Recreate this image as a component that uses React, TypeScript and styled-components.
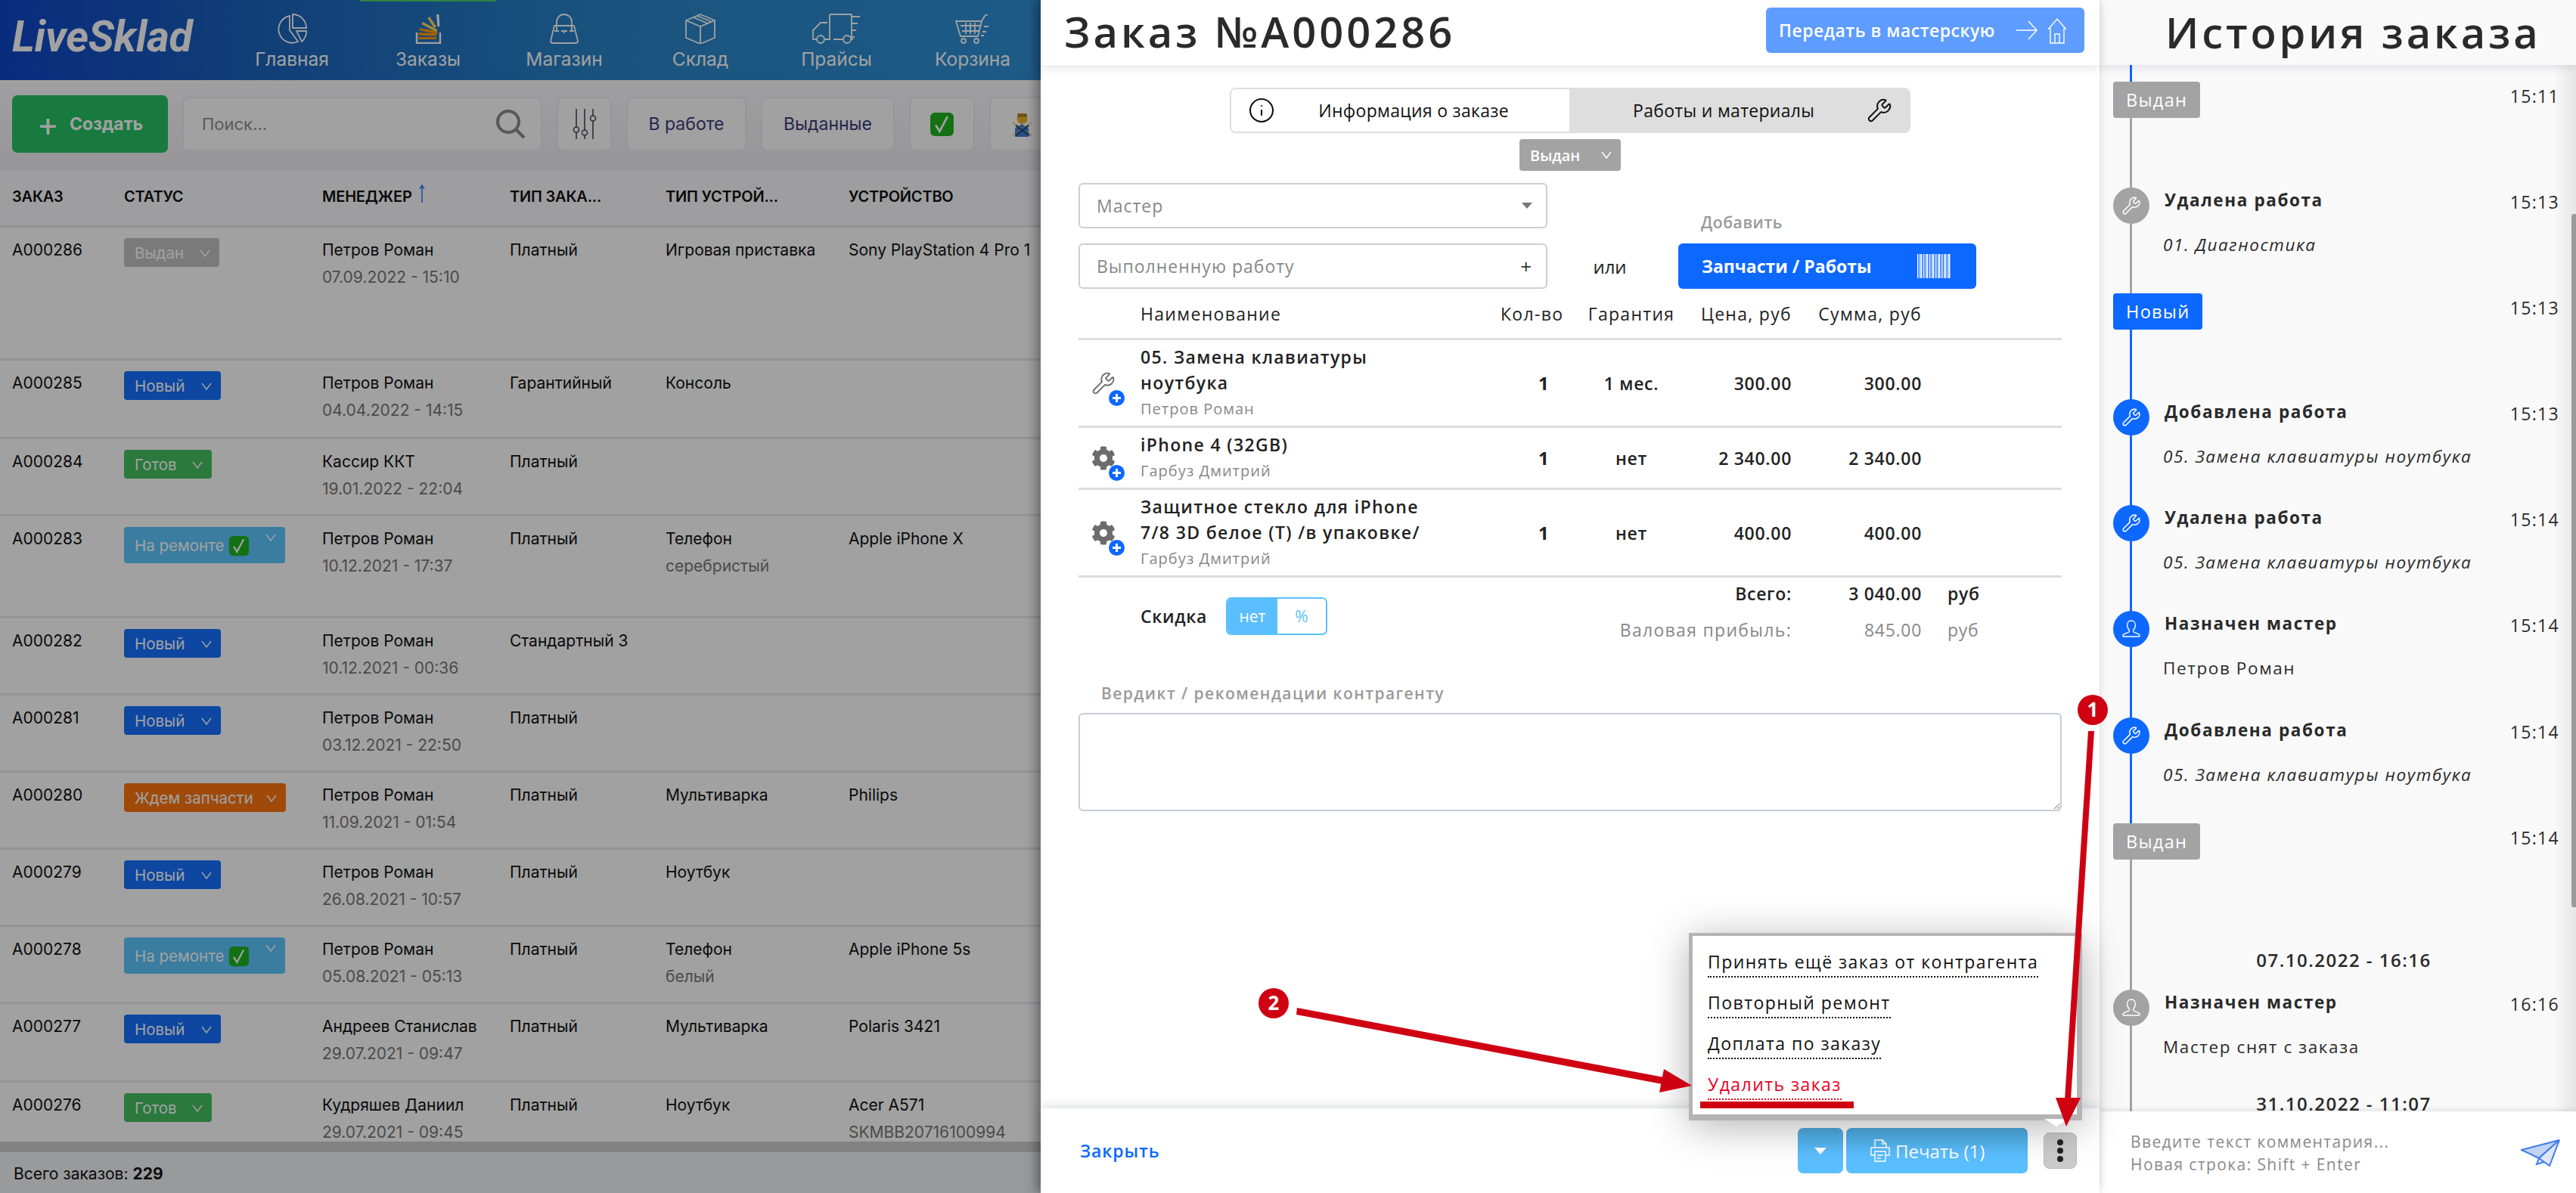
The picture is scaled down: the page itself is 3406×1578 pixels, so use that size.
import styled, { createGlobalStyle } from 'styled-components'
import { Wrench, Info } from 'lucide-react'
import { FaCog } from 'react-icons/fa'

const GlobalStyle = createGlobalStyle`
    html, body {
        margin: 0;
        padding: 0;
        background: #fff;
    }

    * {
        box-sizing: border-box;
    }
`

const Page = styled.div`
    position: relative;
    width: 3406px;
    height: 1578px;
    display: flex;
    overflow: hidden;
    font-family: "Open Sans", "Noto Sans", sans-serif;
`

/* ---- list of orders, dimmed behind the drawer ---- */

const ListPane = styled.div`
    position: relative;
    flex: none;
    width: 1376px;
    height: 100%;
    display: flex;
    flex-direction: column;
    overflow: hidden;
    font-family: Inter, "Open Sans", sans-serif;
    background: #fff;
`

const Dim = styled.div`
    position: absolute;
    inset: 0;
    background: rgba(0, 0, 0, 0.37);
    z-index: 5;
`

const NavBar = styled.div`
    flex: none;
    height: 106px;
    display: flex;
    background: linear-gradient(90deg, #1046c8 0%, #1a63bc 24%, #2a85c8 60%, #2f90d6 100%);
`

const Logo = styled.div`
    width: 296px;
    padding: 17px 0 0 16px;
    font-family: Roboto, sans-serif;
    font-style: italic;
    font-weight: 700;
    font-size: 57px;
    line-height: 64px;
    letter-spacing: -0.3px;
    color: #fff;
`

const NavItem = styled.div<{ $active?: boolean }>`
    position: relative;
    width: 180px;
    display: flex;
    flex-direction: column;
    align-items: center;
    padding-top: 18px;
    color: #fff;
    font-size: 24.5px;
    line-height: 40px;

    &::before {
        content: '';
        position: absolute;
        top: 0;
        left: 0;
        right: 0;
        height: 2px;
        background: ${(p) => (p.$active ? '#4bd06a' : 'transparent')};
    }

    svg {
        height: 40px;
        fill: none;
        stroke: #fff;
        stroke-width: 1.8;
    }
`

const Toolbar = styled.div`
    flex: none;
    height: 120px;
    display: flex;
    align-items: center;
    padding: 0 0 4px 16px;
    gap: 19px;
    background: linear-gradient(180deg, #fdfdff 0%, #eeeef3 100%);
`

const CreateButton = styled.div`
    flex: none;
    width: 206px;
    height: 76px;
    display: flex;
    align-items: center;
    justify-content: center;
    gap: 14px;
    border-radius: 7px;
    background: #27c264;
    color: #fff;
    font-size: 23px;
    font-weight: 700;
`

const PlusMark = styled.span`
    font-size: 44px;
    font-weight: 400;
    line-height: 40px;
`

const SearchBox = styled.div`
    flex: none;
    width: 476px;
    height: 72px;
    display: flex;
    align-items: center;
    justify-content: space-between;
    padding: 0 20px 0 24px;
    border: 2px solid #eeeef3;
    border-radius: 8px;
    background: #fff;
    font-size: 22px;
    color: #909090;
`

const ToolButton = styled.div<{ $w: number }>`
    flex: none;
    width: ${(p) => p.$w}px;
    height: 72px;
    display: flex;
    align-items: center;
    justify-content: center;
    border: 2px solid #eeeef3;
    border-radius: 8px;
    background: #fff;
    font-size: 23px;
    color: #3c3c78;
`

const HeadRow = styled.div`
    flex: none;
    height: 75px;
    display: grid;
    grid-template-columns: 148px 262px 248px 206px 242px 1fr;
    padding: 0 0 4px 16px;
    align-items: center;
    border-bottom: 3px solid #e9e9f1;
    background: #fbfbfe;
    font-size: 20px;
    font-weight: 600;
    letter-spacing: -0.2px;
    color: #111;
    white-space: nowrap;
`

const HeadCell = styled.div`
    display: flex;
    align-items: center;
`

const SortArrow = styled.svg`
    width: 10px;
    height: 24px;
    margin: -8px 0 0 8px;
    fill: none;
    stroke: #1571ff;
    stroke-width: 1.4;
`

const Rows = styled.div`
    flex: none;
    height: 1209px;
    overflow: hidden;
`

const Row = styled.div<{ $h: number }>`
    height: ${(p) => p.$h}px;
    display: grid;
    grid-template-columns: 148px 262px 248px 206px 242px 1fr;
    padding: 12px 0 0 16px;
    border-bottom: 3px solid #e9e9f1;
    white-space: nowrap;
    overflow: hidden;
`

const Cell = styled.div`
    font-size: 21px;
    line-height: 36px;
    color: #111;
`

const SubLine = styled.div`
    color: #777;
`

const StatusBadge = styled.div<{ $bg: string; $w: number; $tall?: boolean }>`
    width: ${(p) => p.$w}px;
    height: ${(p) => (p.$tall ? 48 : 38)}px;
    margin-top: 2px;
    padding: ${(p) => (p.$tall ? '11px' : '2px')} 12px 0 14px;
    display: flex;
    align-items: ${(p) => (p.$tall ? 'flex-start' : 'center')};
    justify-content: space-between;
    border-radius: 4px;
    background: ${(p) => p.$bg};
    font-size: 20.5px;
    line-height: 24px;
    color: #fff;
`

const BadgeLabel = styled.span`
    display: flex;
    align-items: center;
    gap: 6px;
`

const Caret = styled.svg`
    flex: none;
    width: 14px;
    height: 10px;
    fill: none;
    stroke: currentColor;
    stroke-width: 1.5;
`

const TallCaret = styled(Caret)`
    margin-top: -2px;
`

const ScrollTrack = styled.div`
    flex: none;
    height: 14px;
    background: #cecece;
`

const ListFooter = styled.div`
    flex: 1;
    display: flex;
    align-items: center;
    padding-left: 18px;
    border-top: 2px solid #f8f8f8;
    background: #f3f4f8;
    font-size: 21px;
    color: #111;
`

/* ---- order drawer ---- */

const OrderPanel = styled.div`
    position: relative;
    z-index: 10;
    flex: none;
    width: 1400px;
    height: 100%;
    display: flex;
    flex-direction: column;
    background: #fff;
    box-shadow: -6px 0 14px rgba(0, 0, 0, 0.35);
`

const OrderHeader = styled.div`
    position: relative;
    z-index: 2;
    flex: none;
    height: 86px;
    display: flex;
    justify-content: space-between;
    padding: 10px 20px 0 31px;
    background: #fff;
    box-shadow: 0 5px 12px rgba(40, 50, 70, 0.1);
`

const Title = styled.div`
    font-size: 56px;
    line-height: 62px;
    font-weight: 600;
    letter-spacing: 4px;
    color: #2a2a2a;
    white-space: nowrap;
`

const TransferButton = styled.div`
    width: 421px;
    height: 60px;
    display: flex;
    align-items: center;
    justify-content: space-between;
    padding: 0 24px 0 17px;
    border-radius: 6px;
    background: #5e9cff;
    color: #fff;
    font-size: 23px;
    font-weight: 600;
    letter-spacing: 0.5px;
    white-space: nowrap;
`

const TransferIcons = styled.svg`
    width: 70px;
    height: 36px;
    fill: none;
    stroke: #fff;
    stroke-width: 1.4;
`

const OrderBody = styled.div`
    flex: 1;
    padding: 30px 50px 0;
    display: flex;
    flex-direction: column;
`

const Tabs = styled.div`
    align-self: center;
    width: 900px;
    height: 60px;
    display: flex;
    border: 2px solid #ddd;
    border-radius: 8px;
    overflow: hidden;
    font-size: 23px;
    letter-spacing: 0.3px;
    color: #111;
`

const Tab = styled.div<{ $active?: boolean }>`
    flex: ${(p) => (p.$active ? '0 0 447px' : 1)};
    display: flex;
    align-items: center;
    justify-content: space-between;
    padding: ${(p) => (p.$active ? '0 80px 0 22px' : '0 22px 0 84px')};
    background: ${(p) => (p.$active ? '#fff' : '#dedede')};
`

const OrderStatus = styled.div`
    align-self: center;
    width: 134px;
    height: 42px;
    margin-top: 8px;
    display: flex;
    align-items: center;
    justify-content: space-between;
    padding: 0 12px 0 14px;
    border-radius: 4px;
    background: #a3a3a3;
    color: #fff;
    font-size: 20px;
    font-weight: 600;
`

const FormGrid = styled.div`
    margin-top: 16px;
    display: grid;
    grid-template-columns: 620px 173px 394px;
    grid-template-rows: 60px 60px;
    row-gap: 20px;
`

const Field = styled.div`
    display: flex;
    align-items: center;
    justify-content: space-between;
    padding: 0 18px 0 22px;
    border: 2px solid #cfcfcf;
    border-radius: 6px;
    color: #888;
    font-size: 23px;
    letter-spacing: 1px;
`

const FieldTriangle = styled.span`
    border-left: 7px solid transparent;
    border-right: 7px solid transparent;
    border-top: 8px solid #777;
`

const FieldPlus = styled.span`
    color: #333;
    font-size: 26px;
`

const AddLabel = styled.div`
    align-self: end;
    margin-bottom: -6px;
    padding-left: 30px;
    color: #999;
    font-size: 21px;
    font-weight: 600;
    letter-spacing: 0.6px;
    grid-column: 3;
`

const OrWord = styled.div`
    align-self: center;
    padding-right: 8px;
    text-align: center;
    font-size: 24px;
    color: #222;
`

const PartsButton = styled.div`
    display: flex;
    align-items: center;
    justify-content: space-between;
    padding: 0 33px 0 31px;
    border-radius: 6px;
    background: #0d68ff;
    color: #fff;
    font-size: 23px;
    font-weight: 700;
`

const partsColumns = '82px 476px 82px 182px 121px 172px 1fr'

const PartsHead = styled.div`
    height: 68px;
    display: grid;
    grid-template-columns: ${partsColumns};
    align-items: center;
    border-bottom: 3px solid #ddd;
    font-size: 23px;
    letter-spacing: 1.3px;
    color: #222;
`

const PartRow = styled.div<{ $h: number }>`
    height: ${(p) => p.$h}px;
    display: grid;
    grid-template-columns: ${partsColumns};
    align-items: center;
    border-bottom: 3px solid #ddd;
    font-size: 23px;
    font-weight: 600;
    letter-spacing: 0.7px;
    color: #222;
`

const HeadCol = styled.div<{ $col: number }>`
    grid-column: ${(p) => p.$col};
    text-align: ${(p) => (p.$col >= 5 ? 'right' : 'left')};
    white-space: nowrap;
`

const PartIcon = styled.div`
    position: relative;
    width: 32px;
    height: 32px;
    margin-left: 17px;
    color: #6c6c6c;

    svg {
        display: block;
        width: 32px;
        height: 32px;
    }
`

const PlusDot = styled.span`
    position: absolute;
    right: -12px;
    bottom: -14px;
    width: 21px;
    height: 21px;
    border-radius: 50%;
    background: #0d68ff;

    &::before,
    &::after {
        content: '';
        position: absolute;
        background: #fff;
    }

    &::before {
        left: 5px;
        right: 5px;
        top: 9px;
        height: 3px;
    }

    &::after {
        top: 5px;
        bottom: 5px;
        left: 9px;
        width: 3px;
    }
`

const PartName = styled.div`
    font-size: 23px;
    line-height: 34px;
    letter-spacing: 1.35px;
    white-space: nowrap;
`

const PartWorker = styled.div`
    font-weight: 400;
    font-size: 20px;
    letter-spacing: 1px;
    color: #888;
    line-height: 35px;
`

const Qty = styled.div`
    padding-left: 50px;
    font-weight: 700;
    font-size: 24px;
`

const Warranty = styled.div`
    text-align: center;
`

const Money = styled.div`
    text-align: right;
    white-space: nowrap;
`

const Totals = styled.div`
    display: grid;
    grid-template-columns: ${partsColumns};
    grid-template-rows: 42px 54px;
    align-items: center;
    font-size: 23px;
    font-weight: 600;
    letter-spacing: 0.7px;
    color: #222;
`

const DiscountCell = styled.div`
    grid-column: 2;
    grid-row: 1 / 3;
    display: flex;
    align-items: center;
    padding-top: 6px;
`

const DiscountLabel = styled.span`
    width: 113px;
`

const DiscountToggle = styled.div`
    width: 134px;
    height: 50px;
    display: flex;
    border: 2px solid #5bbfff;
    border-radius: 7px;
    overflow: hidden;
    font-weight: 400;
    font-size: 21px;
    letter-spacing: 0;
`

const ToggleSide = styled.div<{ $on?: boolean }>`
    flex: ${(p) => (p.$on ? '0 0 66px' : 1)};
    display: flex;
    align-items: center;
    justify-content: center;
    background: ${(p) => (p.$on ? '#5bbfff' : '#fff')};
    color: ${(p) => (p.$on ? '#fff' : '#5bbfff')};
`

const TotalLabel = styled.div<{ $muted?: boolean }>`
    grid-column: 3 / 6;
    text-align: right;
    font-weight: ${(p) => (p.$muted ? 400 : 600)};
    color: ${(p) => (p.$muted ? '#888' : '#222')};
    letter-spacing: ${(p) => (p.$muted ? '1.3px' : '0.7px')};
`

const TotalValue = styled(Money)<{ $muted?: boolean }>`
    grid-column: 6;
    font-weight: ${(p) => (p.$muted ? 400 : 600)};
    color: ${(p) => (p.$muted ? '#888' : '#222')};
`

const TotalUnit = styled.div<{ $muted?: boolean }>`
    grid-column: 7;
    padding-left: 34px;
    font-weight: ${(p) => (p.$muted ? 400 : 600)};
    color: ${(p) => (p.$muted ? '#888' : '#222')};
`

const VerdictLabel = styled.div`
    margin: 45px 0 14px 30px;
    font-size: 21px;
    line-height: 24px;
    font-weight: 600;
    letter-spacing: 1.45px;
    color: #9a9a9a;
`

const VerdictInput = styled.textarea`
    display: block;
    width: 100%;
    height: 130px;
    border: 2px solid #c5ced6;
    border-radius: 6px;
    outline: none;
    background: #fff;
`

const OrderFooter = styled.div`
    position: relative;
    z-index: 2;
    flex: none;
    height: 112px;
    display: flex;
    align-items: center;
    justify-content: space-between;
    padding: 0 30px 0 52px;
    background: #fff;
    box-shadow: 0 -5px 10px rgba(40, 50, 70, 0.12);
`

const CloseLink = styled.div`
    color: #0d68ff;
    font-size: 23px;
    font-weight: 600;
    letter-spacing: 0.9px;
`

const FooterActions = styled.div`
    display: flex;
    align-items: center;
`

const PrintArrow = styled.div`
    width: 60px;
    height: 60px;
    display: flex;
    align-items: center;
    justify-content: center;
    border-radius: 7px;
    background: linear-gradient(180deg, #4ea9df 0%, #5bbfff 60%);
`

const ArrowDown = styled.span`
    border-left: 8px solid transparent;
    border-right: 8px solid transparent;
    border-top: 9px solid #fff;
`

const PrintButton = styled.div`
    width: 240px;
    height: 60px;
    margin-left: 4px;
    padding-left: 32px;
    display: flex;
    align-items: center;
    gap: 7px;
    border-radius: 7px;
    background: linear-gradient(180deg, #4ea9df 0%, #5bbfff 60%);
    color: #fff;
    font-size: 24px;
`

const PrinterIcon = styled.svg`
    width: 26px;
    height: 30px;
    fill: none;
    stroke: #fff;
    stroke-width: 1.4;
`

const DotsButton = styled.div`
    width: 44px;
    height: 48px;
    margin-left: 21px;
    display: flex;
    flex-direction: column;
    align-items: center;
    justify-content: center;
    gap: 3px;
    border-radius: 8px;
    border: 1px solid #bbb;
    background: #cbcbcb;
`

const Dot = styled.span`
    width: 8px;
    height: 8px;
    border-radius: 50%;
    background: #222;
`

const ActionsMenu = styled.div`
    position: absolute;
    right: 23px;
    bottom: 96px;
    width: 520px;
    height: 248px;
    padding: 19px 0 0 20px;
    display: flex;
    flex-direction: column;
    align-items: flex-start;
    background: #fff;
    border: solid #b4b4b4;
    border-width: 4px 7px 8px 5px;
    box-shadow: 0 8px 50px rgba(0, 0, 0, 0.3);
    font-size: 23px;
    letter-spacing: 1.45px;

    &::after {
        content: '';
        position: absolute;
        right: 11px;
        bottom: -16px;
        border-left: 16px solid transparent;
        border-right: 16px solid transparent;
        border-top: 10px solid #fff;
    }
`

const MenuLink = styled.div<{ $danger?: boolean }>`
    height: 36px;
    margin-bottom: 18px;
    line-height: 30px;
    border-bottom: 2px dotted ${(p) => (p.$danger ? '#e8001c' : '#111')};
    color: ${(p) => (p.$danger ? '#e8001c' : '#111')};
    white-space: nowrap;
`

/* ---- history ---- */

const HistoryPanel = styled.div`
    position: relative;
    flex: 1;
    height: 100%;
    display: flex;
    flex-direction: column;
    background: #f9f9f9;
    letter-spacing: 1.3px;

    &::after {
        content: '';
        position: absolute;
        top: 0;
        bottom: 0;
        right: 0;
        width: 30px;
        background: linear-gradient(90deg, rgba(0, 0, 0, 0), rgba(0, 0, 0, 0.08));
        pointer-events: none;
    }
`

const HistoryHeader = styled.div`
    position: relative;
    z-index: 2;
    flex: none;
    height: 86px;
    padding: 11px 0 0 87px;
    background: #f9f9f9;
    box-shadow: 0 4px 10px rgba(40, 50, 70, 0.1);
`

const HistoryTitle = styled.div`
    font-size: 56px;
    line-height: 62px;
    font-weight: 600;
    letter-spacing: 3.9px;
    color: #2a2a2a;
    white-space: nowrap;
`

const HistoryList = styled.div`
    flex: 1;
    overflow: hidden;
    padding: 0 22px 0 18px;
`

const LeadLine = styled.div`
    height: 22px;
    margin-left: 22px;
    border-left: 3px solid #0d68ff;
`

const Entry = styled.div<{ $h?: number; $line: string }>`
    position: relative;
    height: ${(p) => p.$h ?? 140}px;
    display: flex;
    align-items: flex-start;

    &::before {
        content: '';
        position: absolute;
        left: 22px;
        top: 0;
        bottom: 0;
        width: 3px;
        background: ${(p) => p.$line};
    }
`

const EntryBadge = styled.div<{ $bg: string }>`
    position: relative;
    height: 48px;
    padding: 0 17px;
    display: flex;
    align-items: center;
    border-radius: 4px;
    background: ${(p) => p.$bg};
    color: #fff;
    font-size: 23.5px;
`

const EntryDot = styled.div<{ $bg: string }>`
    position: relative;
    flex: none;
    width: 48px;
    height: 48px;
    display: flex;
    align-items: center;
    justify-content: center;
    border-radius: 50%;
    background: ${(p) => p.$bg};
    color: #fff;

    svg {
        width: 26px;
        height: 26px;
    }
`

const EntryText = styled.div`
    margin-left: 20px;
`

const EntryTitle = styled.div`
    font-size: 22.5px;
    line-height: 34px;
    font-weight: 700;
    letter-spacing: 1.6px;
    color: #2a2a2a;
`

const EntryNote = styled.div<{ $italic?: boolean }>`
    margin-top: 25px;
    margin-left: -2px;
    font-size: 22.5px;
    line-height: 34px;
    letter-spacing: 1.6px;
    font-style: ${(p) => (p.$italic ? 'italic' : 'normal')};
    color: #2a2a2a;
`

const EntryTime = styled.div`
    margin-left: auto;
    font-size: 23px;
    line-height: 38px;
    color: #2a2a2a;
`

const DateRow = styled(Entry)`
    height: 80px;
    align-items: center;
    justify-content: center;
    padding-left: 20px;
    font-size: 24px;
    font-weight: 600;
    letter-spacing: 1.5px;
    color: #2a2a2a;
`

const HistoryScroll = styled.div`
    position: absolute;
    right: 0;
    top: 283px;
    height: 917px;
    width: 6px;
    border-radius: 3px 0 0 3px;
    background: #a0a6aa;
`

const CommentBar = styled.div`
    position: relative;
    z-index: 2;
    flex: none;
    height: 108px;
    display: flex;
    align-items: center;
    justify-content: space-between;
    padding: 2px 21px 0 41px;
    background: #fff;
    box-shadow: 0 -2px 6px rgba(40, 50, 70, 0.12);
    font-size: 21px;
    line-height: 30px;
    letter-spacing: 1.4px;
    color: #8a8a8a;
`

const SendIcon = styled.svg`
    width: 52px;
    height: 36px;
`

/* ---- red callouts drawn on top of the screenshot ---- */

const Callouts = styled.svg`
    position: absolute;
    inset: 0;
    z-index: 20;
    width: 3406px;
    height: 1578px;
    pointer-events: none;
`

const CalloutNumber = styled.text`
    font-family: "Open Sans", sans-serif;
    font-weight: 700;
    font-size: 26px;
    fill: #fff;
    text-anchor: middle;
`

function CheckEmoji({ size }: { size: number }) {
    return (
        <svg width={size} height={size} viewBox="0 0 32 32">
            <rect x="1" y="1" width="30" height="30" rx="6" fill="#1fb31f" />
            <path d="M8 17l5 8 10-19" fill="none" stroke="#fff" strokeWidth="2.6" />
        </svg>
    )
}

function PersonEmoji() {
    return (
        <svg width="33" height="33" viewBox="0 0 33 33">
            <circle cx="16.5" cy="9" r="7" fill="#e8b530" />
            <rect x="10" y="2" width="13" height="5" rx="2" fill="#b4802a" />
            <path d="M7 33V22l9-6 9 6v11z" fill="#3f7fd0" />
            <path d="M4 14l25 17M29 14L4 31" stroke="#e8b530" strokeWidth="3" opacity="0.4" />
            <path d="M8 18l18 13M25 18L8 31" stroke="#1e4f9c" strokeWidth="2.5" />
        </svg>
    )
}

function PieIcon() {
    return (
        <svg width="40" viewBox="0 0 40 40">
            <path d="M21 1a18 18 0 0 1 18 18H21z" />
            <path d="M26 23h13a18 18 0 0 1-6 14z" />
            <path d="M17 3a18 18 0 1 0 11 34L17 22z" />
        </svg>
    )
}

function StackIcon() {
    return (
        <svg width="40" viewBox="0 0 40 40">
            <path d="M5 25v14h31V25" stroke="#fff" strokeWidth="2.4" />
            <g stroke="none">
                <rect x="7" y="31" width="24" height="3" fill="#ff9a00" />
                <rect x="7" y="25" width="24" height="3.4" fill="#ff9a00" transform="rotate(3 7 25)" />
                <rect x="9" y="19" width="24" height="3.4" fill="#ff9a00" transform="rotate(11 9 19)" />
                <rect x="13" y="11" width="22" height="3.4" fill="#ffd75e" transform="rotate(28 13 11)" />
                <rect x="22" y="4" width="16" height="3.4" fill="#ffd75e" transform="rotate(56 22 4)" />
                <path d="M31 1h3.4l1 16h-3z" fill="#fff" />
            </g>
        </svg>
    )
}

function BagIcon() {
    return (
        <svg width="40" viewBox="0 0 40 40">
            <path d="M7 16h26l5 20q0 3-3 3H5q-3 0-3-3z" />
            <path d="M10 23V11a10 10 0 0 1 20 0v12" />
            <path d="M7 23h6M27 23h6M16 23h8M20 23v3" />
        </svg>
    )
}

function BoxIcon() {
    return (
        <svg width="40" viewBox="0 0 40 40">
            <path d="M20 1l19 8v23l-19 8-19-8V9z" />
            <path d="M1 9l19 8 19-8M20 17v23" />
            <path d="M11 5l19 8M16 3l19 8" />
        </svg>
    )
}

function TruckIcon() {
    return (
        <svg width="64" viewBox="0 0 64 40">
            <path d="M5 34H1V22l10-10h9M17 34h6V2q0-1 1-1h27q1 0 1 1v32M28 34h12M52 34h2" />
            <circle cx="11" cy="34" r="5" />
            <circle cx="46" cy="34" r="5" />
            <path d="M52 4h11M52 13h8M52 22h6M52 31h4" />
        </svg>
    )
}

function CartIcon() {
    return (
        <svg width="46" viewBox="0 0 46 40">
            <path d="M1 10h34l-5 20H7L1 10zM35 10l4-7q1-2 4-1" />
            <path d="M7 16h27M9 23h22M14 12v15M20 12v15M26 12v15" />
            <circle cx="11" cy="36" r="3" />
            <circle cx="28" cy="36" r="3" />
            <path d="M38 17h6M36 24h5M34 29h4" />
        </svg>
    )
}

function SearchGlyph() {
    return (
        <svg width="40" height="40" viewBox="0 0 40 40" fill="none" stroke="#8a8a8a" strokeWidth="4">
            <circle cx="17" cy="17" r="14" />
            <path d="M27 27l11 11" />
        </svg>
    )
}

function SlidersGlyph() {
    return (
        <svg width="34" height="40" viewBox="0 0 34 40" fill="none" stroke="#4a4a62" strokeWidth="1.6">
            <path d="M6 0v24M6 31v9M17 0v28M17 35v5M28 0v9M28 16v24" />
            <circle cx="6" cy="27.5" r="3.5" />
            <circle cx="17" cy="31.5" r="3.5" />
            <circle cx="28" cy="12.5" r="3.5" />
        </svg>
    )
}

function CaretGlyph() {
    return (
        <path d="M1 1l6 8 6-8" />
    )
}

function UserGlyph() {
    return (
        <svg viewBox="0 0 26 26" fill="none" stroke="currentColor" strokeWidth="1.3">
            <path d="M13 2c3.4 0 5.4 2.6 5.4 6 0 2.8-1.2 5-2.7 6.2v2.2c0 1.2 6.5 2.4 8.3 4.6q.8 1-.4 2H2.400q-1.200-1-.4-2c1.800-2.200 8.300-3.400 8.300-4.600v-2.200C8.800 13 7.600 10.800 7.600 8c0-3.400 2-6 5.400-6z" />
        </svg>
    )
}

function Barcode() {
    const bars = [0, 3, 5, 8, 11, 13, 16, 19, 21, 24, 27, 29, 32, 35, 37, 40, 42]
    return (
        <svg width="45" height="32" viewBox="0 0 45 32">
            {bars.map((x) => (
                <rect key={x} x={x} y="0" width="1.500" height="32" fill="#fff" />
            ))}
        </svg>
    )
}

const columns = ['ЗАКАЗ', 'СТАТУС', 'МЕНЕДЖЕР', 'ТИП ЗАКА...', 'ТИП УСТРОЙ...', 'УСТРОЙСТВО']

type Status = 'new' | 'done' | 'issued' | 'repair' | 'wait'

const statusStyle: Record<Status, { label: string; bg: string; w: number }> = {
    new: { label: 'Новый', bg: '#1571ff', w: 128 },
    done: { label: 'Готов', bg: '#44c060', w: 116 },
    issued: { label: 'Выдан', bg: '#c2c2c2', w: 126 },
    repair: { label: 'На ремонте', bg: '#5cc6ff', w: 213 },
    wait: { label: 'Ждем запчасти', bg: '#fe7510', w: 214 },
}

const orders: {
    id: string
    status: Status
    manager: string
    date: string
    type: string
    device?: string
    color?: string
    model?: string
    serial?: string
    h: number
}[] = [
    { id: 'A000286', status: 'issued', manager: 'Петров Роман', date: '07.09.2022 - 15:10', type: 'Платный', device: 'Игровая приставка', model: 'Sony PlayStation 4 Pro 1', h: 176 },
    { id: 'A000285', status: 'new', manager: 'Петров Роман', date: '04.04.2022 - 14:15', type: 'Гарантийный', device: 'Консоль', h: 104 },
    { id: 'A000284', status: 'done', manager: 'Кассир ККТ', date: '19.01.2022 - 22:04', type: 'Платный', h: 102 },
    { id: 'A000283', status: 'repair', manager: 'Петров Роман', date: '10.12.2021 - 17:37', type: 'Платный', device: 'Телефон', color: 'серебристый', model: 'Apple iPhone X', h: 135 },
    { id: 'A000282', status: 'new', manager: 'Петров Роман', date: '10.12.2021 - 00:36', type: 'Стандартный 3', h: 102 },
    { id: 'A000281', status: 'new', manager: 'Петров Роман', date: '03.12.2021 - 22:50', type: 'Платный', h: 102 },
    { id: 'A000280', status: 'wait', manager: 'Петров Роман', date: '11.09.2021 - 01:54', type: 'Платный', device: 'Мультиварка', model: 'Philips', h: 102 },
    { id: 'A000279', status: 'new', manager: 'Петров Роман', date: '26.08.2021 - 10:57', type: 'Платный', device: 'Ноутбук', h: 102 },
    { id: 'A000278', status: 'repair', manager: 'Петров Роман', date: '05.08.2021 - 05:13', type: 'Платный', device: 'Телефон', color: 'белый', model: 'Apple iPhone 5s', h: 102 },
    { id: 'A000277', status: 'new', manager: 'Андреев Станислав', date: '29.07.2021 - 09:47', type: 'Платный', device: 'Мультиварка', model: 'Polaris 3421', h: 104 },
    { id: 'A000276', status: 'done', manager: 'Кудряшев Даниил', date: '29.07.2021 - 09:45', type: 'Платный', device: 'Ноутбук', model: 'Acer A571', serial: 'SKMBB20716100994', h: 104 },
]

const parts = [
    { kind: 'work', name: ['05. Замена клавиатуры', 'ноутбука'], worker: 'Петров Роман', warranty: '1 мес.', price: '300.00', sum: '300.00', h: 116 },
    { kind: 'part', name: ['iPhone 4 (32GB)'], worker: 'Гарбуз Дмитрий', warranty: 'нет', price: '2 340.00', sum: '2 340.00', h: 82 },
    { kind: 'part', name: ['Защитное стекло для iPhone', '7/8 3D белое (Т) /в упаковке/'], worker: 'Гарбуз Дмитрий', warranty: 'нет', price: '400.00', sum: '400.00', h: 116 },
]

const BLUE = '#0d68ff'
const GREY = '#a3a3a3'

function HistoryEvent({ icon, title, note, italic, time, color, h }: { icon: 'wrench' | 'user', title: string, note: string, italic?: boolean, time: string, color: string, h?: number }) {
    return (
        <Entry $line={color} $h={h}>
            <EntryDot $bg={color}>
                {icon === 'wrench' ? <Wrench strokeWidth={1.4} /> : <UserGlyph />}
            </EntryDot>
            <EntryText>
                <EntryTitle>{title}</EntryTitle>
                <EntryNote $italic={italic}>{note}</EntryNote>
            </EntryText>
            <EntryTime>{time}</EntryTime>
        </Entry>
    )
}

export default function App() {
    return (
        <Page>
            <GlobalStyle />

            <ListPane>
                <NavBar>
                    <Logo>LiveSklad</Logo>
                    <NavItem><PieIcon />Главная</NavItem>
                    <NavItem $active><StackIcon />Заказы</NavItem>
                    <NavItem><BagIcon />Магазин</NavItem>
                    <NavItem><BoxIcon />Склад</NavItem>
                    <NavItem><TruckIcon />Прайсы</NavItem>
                    <NavItem><CartIcon />Корзина</NavItem>
                </NavBar>

                <Toolbar>
                    <CreateButton><PlusMark>+</PlusMark>Создать</CreateButton>
                    <SearchBox>Поиск...<SearchGlyph /></SearchBox>
                    <ToolButton $w={73}><SlidersGlyph /></ToolButton>
                    <ToolButton $w={159}>В работе</ToolButton>
                    <ToolButton $w={177}>Выданные</ToolButton>
                    <ToolButton $w={87}><CheckEmoji size={33} /></ToolButton>
                    <ToolButton $w={87}><PersonEmoji /></ToolButton>
                </Toolbar>

                <HeadRow>
                    {columns.map((c) => (
                        <HeadCell key={c}>
                            {c}
                            {c === 'МЕНЕДЖЕР' && (
                                <SortArrow viewBox="0 0 10 24"><path d="M5 24V1M2 6l3-5 3 5" /></SortArrow>
                            )}
                        </HeadCell>
                    ))}
                </HeadRow>

                <Rows>
                    {orders.map((o) => {
                        const s = statusStyle[o.status]
                        const tall = o.status === 'repair'
                        return (
                            <Row key={o.id} $h={o.h}>
                                <Cell>{o.id}</Cell>
                                <Cell>
                                    <StatusBadge $bg={s.bg} $w={s.w} $tall={tall}>
                                        <BadgeLabel>{s.label}{tall && <CheckEmoji size={28} />}</BadgeLabel>
                                        {tall ? (
                                            <TallCaret viewBox="0 0 14 10"><CaretGlyph /></TallCaret>
                                        ) : (
                                            <Caret viewBox="0 0 14 10"><CaretGlyph /></Caret>
                                        )}
                                    </StatusBadge>
                                </Cell>
                                <Cell>{o.manager}<SubLine>{o.date}</SubLine></Cell>
                                <Cell>{o.type}</Cell>
                                <Cell>{o.device}{o.color && <SubLine>{o.color}</SubLine>}</Cell>
                                <Cell>{o.model}{o.serial && <SubLine>{o.serial}</SubLine>}</Cell>
                            </Row>
                        )
                    })}
                </Rows>

                <ScrollTrack />
                <ListFooter><span>Всего заказов: <b>229</b></span></ListFooter>

                <Dim />
            </ListPane>

            <OrderPanel>
                <OrderHeader>
                    <Title>Заказ №A000286</Title>
                    <TransferButton>
                        Передать в мастерскую
                        <TransferIcons viewBox="0 0 70 36">
                            <path d="M4 18h26M20 6l11 12-11 12" />
                            <path d="M46 17l12-14 12 14M49 15v20h18V15M55 35V23h6v12" />
                        </TransferIcons>
                    </TransferButton>
                </OrderHeader>

                <OrderBody>
                    <Tabs>
                        <Tab $active><Info size={36} strokeWidth={1.4} />Информация о заказе</Tab>
                        <Tab>Работы и материалы<Wrench size={34} strokeWidth={1.4} /></Tab>
                    </Tabs>

                    <OrderStatus>
                        Выдан
                        <Caret viewBox="0 0 14 10"><CaretGlyph /></Caret>
                    </OrderStatus>

                    <FormGrid>
                        <Field>Мастер<FieldTriangle /></Field>
                        <AddLabel>Добавить</AddLabel>
                        <Field>Выполненную работу<FieldPlus>+</FieldPlus></Field>
                        <OrWord>или</OrWord>
                        <PartsButton>Запчасти / Работы<Barcode /></PartsButton>
                    </FormGrid>

                    <PartsHead>
                        <HeadCol $col={2}>Наименование</HeadCol>
                        <HeadCol $col={3}>Кол-во</HeadCol>
                        <HeadCol $col={4}><Warranty>Гарантия</Warranty></HeadCol>
                        <HeadCol $col={5}>Цена, руб</HeadCol>
                        <HeadCol $col={6}>Сумма, руб</HeadCol>
                    </PartsHead>

                    {parts.map((p) => (
                        <PartRow key={p.worker + p.price} $h={p.h}>
                            <PartIcon>
                                {p.kind === 'work' ? <Wrench strokeWidth={1.4} /> : <FaCog />}
                                <PlusDot />
                            </PartIcon>
                            <div>
                                {p.name.map((line) => <PartName key={line}>{line}</PartName>)}
                                <PartWorker>{p.worker}</PartWorker>
                            </div>
                            <Qty>1</Qty>
                            <Warranty>{p.warranty}</Warranty>
                            <Money>{p.price}</Money>
                            <Money>{p.sum}</Money>
                        </PartRow>
                    ))}

                    <Totals>
                        <DiscountCell>
                            <DiscountLabel>Скидка</DiscountLabel>
                            <DiscountToggle>
                                <ToggleSide $on>нет</ToggleSide>
                                <ToggleSide>%</ToggleSide>
                            </DiscountToggle>
                        </DiscountCell>
                        <TotalLabel>Всего:</TotalLabel>
                        <TotalValue>3 040.00</TotalValue>
                        <TotalUnit>руб</TotalUnit>
                        <TotalLabel $muted>Валовая прибыль:</TotalLabel>
                        <TotalValue $muted>845.00</TotalValue>
                        <TotalUnit $muted>руб</TotalUnit>
                    </Totals>

                    <VerdictLabel>Вердикт / рекомендации контрагенту</VerdictLabel>
                    <VerdictInput />
                </OrderBody>

                <OrderFooter>
                    <CloseLink>Закрыть</CloseLink>
                    <FooterActions>
                        <PrintArrow><ArrowDown /></PrintArrow>
                        <PrintButton>
                            <PrinterIcon viewBox="0 0 26 30">
                                <path d="M6 11V1h10l5 5v5M16 1v5h5" />
                                <path d="M6 21H1V11h24v10h-5" />
                                <path d="M6 16h14v13H6zM9 21h8M9 25h5" />
                            </PrinterIcon>
                            Печать (1)
                        </PrintButton>
                        <DotsButton><Dot /><Dot /><Dot /></DotsButton>
                    </FooterActions>

                    <ActionsMenu>
                        <MenuLink>Принять ещё заказ от контрагента</MenuLink>
                        <MenuLink>Повторный ремонт</MenuLink>
                        <MenuLink>Доплата по заказу</MenuLink>
                        <MenuLink $danger>Удалить заказ</MenuLink>
                    </ActionsMenu>
                </OrderFooter>
            </OrderPanel>

            <HistoryPanel>
                <HistoryHeader>
                    <HistoryTitle>История заказа</HistoryTitle>
                </HistoryHeader>

                <HistoryList>
                    <LeadLine />
                    <Entry $line={GREY}>
                        <EntryBadge $bg={GREY}>Выдан</EntryBadge>
                        <EntryTime>15:11</EntryTime>
                    </Entry>
                    <HistoryEvent icon="wrench" title="Удалена работа" note="01. Диагностика" italic time="15:13" color={GREY} />
                    <Entry $line={BLUE}>
                        <EntryBadge $bg={BLUE}>Новый</EntryBadge>
                        <EntryTime>15:13</EntryTime>
                    </Entry>
                    <HistoryEvent icon="wrench" title="Добавлена работа" note="05. Замена клавиатуры ноутбука" italic time="15:13" color={BLUE} />
                    <HistoryEvent icon="wrench" title="Удалена работа" note="05. Замена клавиатуры ноутбука" italic time="15:14" color={BLUE} />
                    <HistoryEvent icon="user" title="Назначен мастер" note="Петров Роман" time="15:14" color={BLUE} h={141} />
                    <HistoryEvent icon="wrench" title="Добавлена работа" note="05. Замена клавиатуры ноутбука" italic time="15:14" color={BLUE} />
                    <Entry $line={GREY}>
                        <EntryBadge $bg={GREY}>Выдан</EntryBadge>
                        <EntryTime>15:14</EntryTime>
                    </Entry>
                    <DateRow $line={GREY}>07.10.2022 - 16:16</DateRow>
                    <HistoryEvent icon="user" title="Назначен мастер" note="Мастер снят с заказа" time="16:16" color={GREY} h={110} />
                    <DateRow $line={GREY}>31.10.2022 - 11:07</DateRow>
                </HistoryList>

                <HistoryScroll />

                <CommentBar>
                    <div>
                        Введите текст комментария...<br />
                        Новая строка: Shift + Enter
                    </div>
                    <SendIcon viewBox="0 0 52 36">
                        <path d="M1 14L51 1 24 25z" fill="#c3d3f2" stroke="#3d7dee" strokeWidth="2" />
                        <path d="M51 1L24 25l14 10zM24 25l-3 8 10-3" fill="#dfe7f7" stroke="#3d7dee" strokeWidth="2" />
                    </SendIcon>
                </CommentBar>
            </HistoryPanel>

            <Callouts viewBox="0 0 3406 1578">
                <g fill="#cf0012" stroke="none">
                    <circle cx="2767" cy="939" r="20" />
                    <polygon points="2761,967 2769,967 2738,1455 2730,1455" />
                    <polygon points="2718,1452 2751,1452 2732,1490" />
                    <circle cx="1684" cy="1327" r="20" />
                    <polygon points="1715,1333 2200,1425 2198,1434 1714,1342" />
                    <polygon points="2200,1414 2194,1445 2237,1436" />
                    <rect x="2248" y="1457" width="203" height="9" />
                </g>
                <CalloutNumber x="2767" y="948">1</CalloutNumber>
                <CalloutNumber x="1684" y="1336">2</CalloutNumber>
            </Callouts>
        </Page>
    )
}
